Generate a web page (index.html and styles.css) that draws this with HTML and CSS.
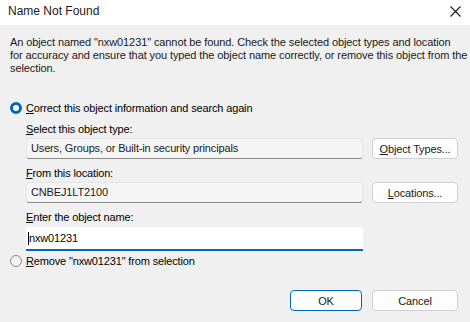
FILE: index.html
```html
<!DOCTYPE html>
<html lang="en">
<head>
  <meta charset="UTF-8">
  <title>Name Not Found</title>
  <link rel="stylesheet" href="styles.css">
</head>
<body>
  <div class="dialog">
    <!-- Title bar -->
    <div class="titlebar">
      <span class="title">Name Not Found</span>
      <svg class="close" width="11" height="11" viewBox="0 0 11 11">
        <path d="M0.5 0.5 L10.5 10.5 M10.5 0.5 L0.5 10.5" stroke="#1a1a1a" stroke-width="1.1" fill="none"/>
      </svg>
    </div>

    <div class="body">
      <p class="message">An object named "nxw01231" cannot be found. Check the selected object types and location<br>for accuracy and ensure that you typed the object name correctly, or remove this object from the<br>selection.</p>

      <div class="option first">
        <span class="radio checked"></span>
        <span><u>C</u>orrect this object information and search again</span>
      </div>

      <div class="group">
        <div class="label"><u>S</u>elect this object type:</div>
        <div class="row">
          <div class="field">Users, Groups, or Built-in security principals</div>
          <button class="btn"><u>O</u>bject Types...</button>
        </div>

        <div class="label"><u>F</u>rom this location:</div>
        <div class="row">
          <div class="field">CNBEJ1LT2100</div>
          <button class="btn"><u>L</u>ocations...</button>
        </div>

        <div class="label last"><u>E</u>nter the object name:</div>
        <div class="input"><span class="caret"></span>nxw01231</div>
      </div>

      <div class="option">
        <span class="radio"></span>
        <span><u>R</u>emove "nxw01231" from selection</span>
      </div>

      <div class="actions">
        <button class="btn default">OK</button>
        <button class="btn">Cancel</button>
      </div>
    </div>
  </div>
</body>
</html>
```

FILE: styles.css
```css
* {
  margin: 0;
  padding: 0;
  box-sizing: border-box;
}

body {
  font-family: 'Liberation Sans', Arial, sans-serif;
  font-size: 11px;
  letter-spacing: -0.15px;
  color: #000;
  background-color: #f0f0f0;
  width: 470px;
  height: 322px;
  overflow: hidden;
}

.dialog {
  display: flex;
  flex-direction: column;
  height: 322px;
}

.titlebar {
  height: 25px;
  background-color: #fff;
  display: flex;
  align-items: center;
  justify-content: space-between;
  padding: 0 9px 3px 8px;
}

.title {
  font-size: 12px;
  letter-spacing: 0;
  color: #1a1a1a;
}

.body {
  flex: 1;
  background-color: #f0f0f0;
  padding: 11px 10px 0 10px;
}

.message {
  letter-spacing: -0.1px;
  line-height: 13px;
  margin-right: -10px;
  white-space: nowrap;
  color: #1a1a1a;
}

.option {
  display: flex;
  align-items: center;
  gap: 4px;
  height: 14px;
  margin-top: 3px;
}

.option.first {
  margin-top: 26px;
}

.radio {
  width: 12px;
  height: 12px;
  border-radius: 50%;
  border: 1px solid #8a8a8a;
  background-color: #f3f3f3;
}

.radio.checked {
  border: 3.5px solid #0067c0;
  background-color: #fff;
}

.group {
  padding-left: 16px;
  padding-top: 7px;
}

.label {
  height: 14px;
  line-height: 14px;
  margin-bottom: 2px;
}

.label.last {
  margin-bottom: 3px;
}

.row {
  display: flex;
  gap: 9px;
  margin-bottom: 7px;
}

.field {
  width: 337px;
  height: 21px;
  line-height: 19px;
  padding: 0 4px;
  background-color: #f5f5f5;
  border: 1px solid #e5e5e5;
  border-bottom-color: #8a8a8a;
  border-radius: 3px;
  color: #1a1a1a;
}

.btn {
  font-family: inherit;
  font-size: 11px;
  letter-spacing: -0.15px;
  color: #1a1a1a;
  width: 86px;
  height: 21px;
  background-color: #fdfdfd;
  border: 1px solid #d0d0d0;
  border-radius: 4px;
}

.btn.default {
  border-color: #0067c0;
  width: 72px;
}

.input {
  width: 337px;
  height: 24px;
  padding: 0 2px;
  background-color: #fff;
  border-bottom: 2px solid #0067c0;
  border-radius: 3px 3px 0 0;
  display: flex;
  align-items: center;
}

.caret {
  display: inline-block;
  width: 1px;
  height: 13px;
  background-color: #000;
}

.actions {
  display: flex;
  justify-content: flex-end;
  gap: 10px;
  margin-top: 22px;
  padding-right: 2px;
}
```
